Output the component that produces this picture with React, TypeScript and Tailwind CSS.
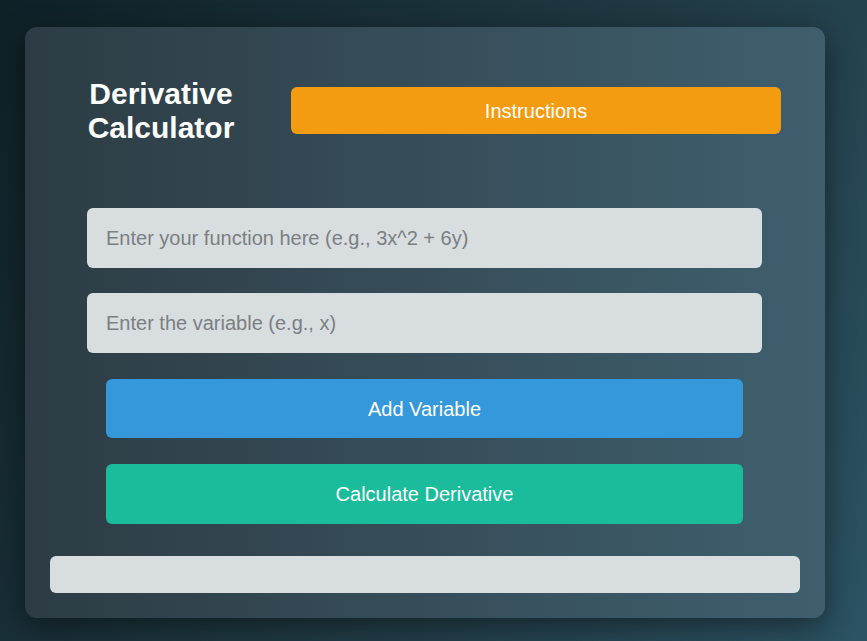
import { useState } from 'react'

export default function App() {
  const [fn, setFn] = useState('')
  const [variable, setVariable] = useState('')

  return (
    <div
      className="min-h-screen w-full bg-[linear-gradient(120deg,#0f2027,#203a43_55%,#2c5364)] pt-[27px] pl-[25px]"
      style={{ fontFamily: '"Liberation Sans", Arial, sans-serif' }}
    >
      <div className="w-[800px] h-[591px] rounded-[12px] bg-[linear-gradient(to_right,#2d3c44,#3f5f6e)] shadow-[0_8px_30px_rgba(0,0,0,0.45)] px-[25px] pt-[24px] flex flex-col items-start">
        <div className="w-full flex items-center mt-[25px] h-[68px]">
          <h1 className="w-[222px] text-center text-white font-bold text-[30px] leading-[34px] pt-[1px]">
            Derivative
            <br />
            Calculator
          </h1>
          <button className="ml-[19px] mr-[19px] flex-1 h-[47px] rounded-[6px] bg-[#f39c12] text-white text-[20px] pt-[1px]">
            Instructions
          </button>
        </div>

        <input
          value={fn}
          onChange={(e) => setFn(e.target.value)}
          placeholder="Enter your function here (e.g., 3x^2 + 6y)"
          className="mt-[64px] ml-[37px] w-[675px] h-[60px] rounded-[6px] bg-[#d8dde0] px-[19px] text-[20px] text-gray-800 placeholder:text-[#7b7f82] outline-none"
        />
        <input
          value={variable}
          onChange={(e) => setVariable(e.target.value)}
          placeholder="Enter the variable (e.g., x)"
          className="mt-[25px] ml-[37px] w-[675px] h-[60px] rounded-[6px] bg-[#d8dde0] px-[19px] text-[20px] text-gray-800 placeholder:text-[#7b7f82] outline-none"
        />
        <button className="mt-[26px] ml-[56px] w-[637px] h-[59px] rounded-[6px] bg-[#3498db] text-white text-[20px]">
          Add Variable
        </button>
        <button className="mt-[26px] ml-[56px] w-[637px] h-[60px] rounded-[6px] bg-[#1abc9c] text-white text-[20px]">
          Calculate Derivative
        </button>
        <div className="mt-[32px] w-[750px] h-[37px] rounded-[6px] bg-[#d8dde0]" />
      </div>
    </div>
  )
}
